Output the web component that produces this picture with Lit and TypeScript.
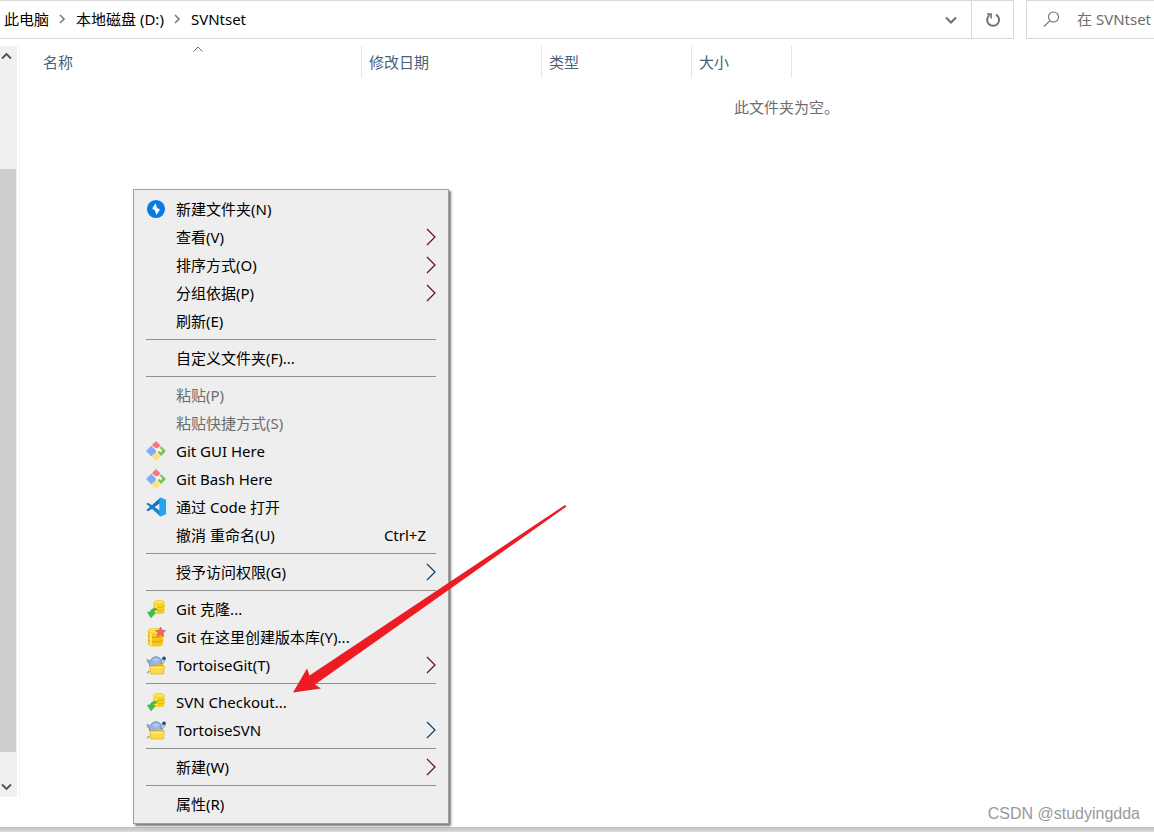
import { LitElement, html, css, svg, nothing } from "lit";
import type { TemplateResult } from "lit";
import { customElement } from "lit/decorators.js";

type Entry =
  | "separator"
  | {
      label: string;
      icon?: TemplateResult;
      submenu?: "red" | "blue";
      shortcut?: string;
      disabled?: boolean;
    };

const boltIcon = svg`
  <circle cx="10" cy="10" r="9.100" fill="#0a7be0"/>
  <path d="M9.600 4.200 6.200 9.400l2.600 1.800 1.600 4.800 3.600-5.400-3-1.600z" fill="#fff"/>`;

const gitIcon = svg`
  <path d="M10 0 20 10 10 20 0 10z" fill="#f6f1ee"/>
  <path d="M10 0l4.600 4.600-2 1.600L10 7.400 5.800 4.200z" fill="#f4787c"/>
  <path d="M5.200 4.800 10 9.400v1.800l-4.600 4.200L0 10z" fill="#7fabf7"/>
  <path d="M15.200 5.200 20 10l-5 5-3.200-3.200 1-2 2.400 1.600 1-2.600-2.600-1.600z" fill="#7cc257"/>
  <path d="M10.400 11.600 14.400 15.600 10 20 5.800 15.800z" fill="#fde173"/>`;

const codeIcon = svg`
  <path d="M14.500.4 2 11.800.3 13l1.700 1.200 3-1.800L14.600 5.800z" fill="#0f74bd"/>
  <path d="M14.500 19.600 2 8.200.3 7 2 5.800l3 1.800 9.600 6.600z" fill="#1583cc"/>
  <path d="M14.500.4 20 2.800v14.400l-5.500 2.400-1.200-1.400V1.800z" fill="#27a2ee"/>`;

const cylinders = svg`
  <path d="M7.600 3.400v9.800c0 2.600 10.900 2.600 10.900 0V3.400z" fill="#fbd021"/>
  <path d="M7.600 6.800c0 2.400 10.900 2.400 10.900 0M7.600 10c0 2.400 10.900 2.400 10.900 0" stroke="#e3a90d" stroke-width=".8" fill="none"/>
  <path d="M10 5.500v9" stroke="#fff07a" stroke-width="1.400"/>
  <ellipse cx="13" cy="3.400" rx="5.400" ry="2" fill="#ffe545" stroke="#efbd16" stroke-width=".6"/>`;

const checkoutIcon = svg`${cylinders}
  <path d="M10.500 9.600C7 9 4.800 10.400 4.200 13L1.400 13.200 5 18.800 9.600 13.800 7.200 13.400c.2-1.600 1.200-2.600 3.300-2.400z" fill="#3cc343" stroke="#1f9a2c" stroke-width=".5"/>`;

const repoIcon = svg`
  <path d="M2 4v13c0 3.400 15 3.400 15 0V4z" fill="#f9c51c"/>
  <path d="M2 8.200c0 3 15 3 15 0M2 12.600c0 3 15 3 15 0" stroke="#dc9a07" fill="none"/>
  <path d="M4.800 6v12" stroke="#ffee75" stroke-width="2"/>
  <ellipse cx="9.500" cy="4" rx="7.500" ry="2.800" fill="#ffe14a" stroke="#efb912" stroke-width=".6"/>
  <path d="m14.600 0 1.500 3.200 3.700.3-2.800 2.500.9 3.600-3.300-1.900-3.300 1.900.9-3.600L9.400 3.500l3.700-.3z" fill="#ef6468" stroke="#cf4e58" stroke-width=".5"/>`;

const tortoiseIcon = svg`
  <path d="M3.600 11C2.800 5 6.600 1.800 10 1.800S16.200 4 16 10z" fill="#94b3ea" stroke="#6583b3" stroke-width=".8"/>
  <path d="M6.500 5.400 10 4l3 1.800M10 4v4" stroke="#c3d5f5" fill="none"/>
  <path d="M.6 4.200l2.800 1.400-2 .6 2.200 2.600M1 18l2.400-2" stroke="#8498a5" stroke-width="1.100" fill="none"/>
  <path d="M14.800 8.500c.6-3.500 1.400-5.300 3-6.300 2.200.6 1.600 4.500-1 6.300z" fill="#b9d6e4" stroke="#5c7b8d" stroke-width=".6"/>
  <circle cx="18" cy="3.200" r="1.800" fill="#1d4d78"/>
  <path d="M4 10.600h5.500l1.500-1.600h6.500v3H4z" fill="#e9b923"/>
  <path d="M4 11.200h14.200L17.400 19H4.400z" fill="#fddc4c" stroke="#dca91b" stroke-width=".7"/>
  <path d="M4.800 12.300h12.600" stroke="#fff2a4"/>`;

const entries: Entry[] = [
  { label: "新建文件夹(N)", icon: boltIcon },
  { label: "查看(V)", submenu: "red" },
  { label: "排序方式(O)", submenu: "red" },
  { label: "分组依据(P)", submenu: "red" },
  { label: "刷新(E)" },
  "separator",
  { label: "自定义文件夹(F)..." },
  "separator",
  { label: "粘贴(P)", disabled: true },
  { label: "粘贴快捷方式(S)", disabled: true },
  { label: "Git GUI Here", icon: gitIcon },
  { label: "Git Bash Here", icon: gitIcon },
  { label: "通过 Code 打开", icon: codeIcon },
  { label: "撤消 重命名(U)", shortcut: "Ctrl+Z" },
  "separator",
  { label: "授予访问权限(G)", submenu: "blue" },
  "separator",
  { label: "Git 克隆...", icon: checkoutIcon },
  { label: "Git 在这里创建版本库(Y)...", icon: repoIcon },
  { label: "TortoiseGit(T)", icon: tortoiseIcon, submenu: "red" },
  "separator",
  { label: "SVN Checkout...", icon: checkoutIcon },
  { label: "TortoiseSVN", icon: tortoiseIcon, submenu: "blue" },
  "separator",
  { label: "新建(W)", submenu: "red" },
  "separator",
  { label: "属性(R)" },
];

@customElement("context-menu")
class ContextMenu extends LitElement {
  static styles = css`
    :host {
      display: block;
      box-sizing: border-box;
      padding: 5px 0;
      background: #eee;
      border: 1px solid #a0a0a0;
      box-shadow: 2px 2px 2px #7c7c7c;
    }
    .item {
      display: grid;
      grid-template-columns: 20px 1fr auto;
      column-gap: 10px;
      align-items: center;
      width: 100%;
      height: 28px;
      padding: 0 12px;
      border: 0;
      background: none;
      color: #000;
      font: inherit;
      line-height: 28px;
      text-align: left;
      white-space: nowrap;
    }
    .item:hover:enabled {
      background: #fff;
    }
    .item:disabled {
      color: #6d6d6d;
    }
    .icon {
      width: 20px;
      height: 20px;
    }
    .shortcut {
      padding-right: 10px;
    }
    .chevron {
      width: 10px;
      height: 18px;
      fill: none;
      stroke-width: 1.2;
    }
    .red {
      stroke: #6b1010;
    }
    .blue {
      stroke: #0c3f66;
    }
    .separator {
      height: 1px;
      margin: 4px 12px;
      border: 0;
      background: #919191;
    }
  `;

  render() {
    return html`<div role="menu">
      ${entries.map((e) =>
        e === "separator"
          ? html`<hr class="separator" />`
          : html`<button class="item" role="menuitem" ?disabled=${e.disabled}>
              <svg class="icon" viewBox="0 0 20 20" aria-hidden="true">${e.icon ?? nothing}</svg>
              <span>${e.label}</span>
              ${e.shortcut ? html`<span class="shortcut">${e.shortcut}</span>` : nothing}
              ${e.submenu
                ? html`<svg class="chevron ${e.submenu}" viewBox="0 0 10 18" aria-hidden="true">
                    <path d="M1 1 9 9 1 17" />
                  </svg>`
                : nothing}
            </button>`
      )}
    </div>`;
  }
}

@customElement("app-root")
class AppRoot extends LitElement {
  static styles = css`
    :host {
      display: flex;
      flex-direction: column;
      position: relative;
      box-sizing: border-box;
      min-height: 100vh;
      overflow: hidden;
      background: #fff;
      color: #000;
      font: 15px/20px "Noto Sans", "Noto Sans CJK SC", sans-serif;
    }
    button {
      margin: 0;
      padding: 0;
      border: 0;
      background: none;
      color: inherit;
      font: inherit;
    }
    svg {
      display: block;
      fill: none;
    }
    .toolbar {
      display: flex;
      gap: 12px;
      height: 39px;
    }
    .address,
    .search {
      display: flex;
      align-items: center;
      box-sizing: border-box;
      border: 1px solid #d9d9d9;
    }
    .address {
      flex: 1;
      border-left: 0;
    }
    .crumbs {
      display: flex;
      flex: 1;
      align-items: center;
      gap: 10px;
      padding: 0 0 2px 4px;
    }
    .history {
      padding: 0 14px;
    }
    .refresh {
      align-self: stretch;
      display: grid;
      place-items: center;
      width: 42px;
      border-left: 1px solid #d9d9d9;
    }
    .search {
      width: 128px;
      border-right: 0;
      padding-left: 16px;
      gap: 16px;
    }
    .search svg {
      flex: none;
    }
    .query {
      flex: 1;
      min-width: 0;
      padding: 0 0 2px 1px;
      border: 0;
      outline: 0;
      background: none;
      font: inherit;
    }
    .query::placeholder {
      color: #6d6d6d;
      opacity: 1;
    }
    .body {
      display: flex;
      flex: 1;
      margin: 7px 0 30px;
    }
    .scrollbar {
      display: flex;
      flex-direction: column;
      width: 17px;
      background: #f0f0f0;
    }
    .scroll-button {
      display: grid;
      place-items: center start;
      height: 20px;
    }
    .before {
      flex: 103;
    }
    .thumb {
      flex: 583;
      margin-right: 1px;
      background: #cdcdcd;
    }
    .after {
      flex: 25;
    }
    .listing {
      flex: 1;
      margin-left: 2px;
      padding-left: 16px;
      border-left: 1px solid #f3f3f3;
    }
    .files {
      width: 100%;
      border-spacing: 0;
      table-layout: fixed;
    }
    .files th {
      box-sizing: border-box;
      height: 32px;
      padding: 0;
      border-right: 1px solid #e5e5e5;
      color: #4c607a;
      font-weight: 400;
      text-align: left;
      vertical-align: top;
    }
    .files .rest {
      border: 0;
    }
    .sort {
      display: grid;
      grid-template-rows: 6px 20px;
      width: 100%;
      padding-left: 7px;
      text-align: left;
    }
    .caret {
      justify-self: center;
      margin-right: 8px;
    }
    .label {
      grid-row: 2;
    }
    .name {
      width: 326px;
    }
    .date {
      width: 180px;
    }
    .type {
      width: 150px;
    }
    .size {
      width: 100px;
    }
    .files .empty {
      padding: 19px 0 0 698px;
      color: #6d6d6d;
      white-space: nowrap;
    }
    .edge {
      height: 5px;
      background: linear-gradient(#bdbdbd, #dcdcdc);
    }
    .menu {
      position: absolute;
      top: 189px;
      left: 133px;
      width: 316px;
    }
    .pointer {
      position: absolute;
      top: 500px;
      left: 290px;
      pointer-events: none;
    }
    .credit {
      position: absolute;
      right: 14px;
      bottom: 8px;
      color: #999;
      font: 16px/20px "Liberation Sans", sans-serif;
    }
  `;

  private crumbArrow() {
    return html`<svg width="7" height="10" stroke="#7a7a7a" stroke-width="1.600" aria-hidden="true">
      <path d="M1 1l4 4-4 4" />
    </svg>`;
  }

  render() {
    return html`
      <header class="toolbar">
        <div class="address">
          <nav class="crumbs" aria-label="地址">
            <button>此电脑</button>
            ${this.crumbArrow()}
            <button>本地磁盘 (D:)</button>
            ${this.crumbArrow()}
            <button>SVNtset</button>
          </nav>
          <button class="history" aria-label="历史记录">
            <svg width="12" height="8" stroke="#6f6f6f" stroke-width="2"><path d="M1 1.500l5 5 5-5" /></svg>
          </button>
          <button class="refresh" aria-label="刷新">
            <svg width="16" height="16" stroke="#707070" stroke-width="2">
              <path d="M11 2.600A6 6 0 1 1 4.600 3" />
              <path d="M2 2h4.200v4.500" stroke-width="1.500" />
            </svg>
          </button>
        </div>
        <div class="search">
          <svg width="17" height="17" stroke="#707070" stroke-width="1.100" aria-hidden="true">
            <circle cx="10.500" cy="6" r="5" />
            <path d="M7 9.600 1 15.500" />
          </svg>
          <input class="query" type="text" aria-label="搜索" placeholder="在 SVNtset" />
        </div>
      </header>
      <main class="body">
        <div class="scrollbar">
          <button class="scroll-button" aria-label="向上滚动">
            <svg width="13" height="8" stroke="#505050" stroke-width="1.800"><path d="M2 6.500 6.500 2 11 6.500" /></svg>
          </button>
          <div class="before"></div>
          <div class="thumb"></div>
          <div class="after"></div>
          <button class="scroll-button" aria-label="向下滚动">
            <svg width="13" height="8" stroke="#505050" stroke-width="1.800"><path d="M2 1.500 6.500 6 11 1.500" /></svg>
          </button>
        </div>
        <div class="listing">
          <table class="files">
            <thead>
              <tr>
                <th class="name">
                  <button class="sort">
                    <svg class="caret" width="10" height="7" stroke="#6d6d6d"><path d="M.5 5.500 5 1l4.500 4.500" /></svg>
                    <span class="label">名称</span>
                  </button>
                </th>
                <th class="date"><button class="sort"><span class="label">修改日期</span></button></th>
                <th class="type"><button class="sort"><span class="label">类型</span></button></th>
                <th class="size"><button class="sort"><span class="label">大小</span></button></th>
                <th class="rest"></th>
              </tr>
            </thead>
            <tbody>
              <tr><td class="empty" colspan="5">此文件夹为空。</td></tr>
            </tbody>
          </table>
        </div>
      </main>
      <div class="edge"></div>
      <context-menu class="menu"></context-menu>
      <svg class="pointer" width="280" height="196" aria-hidden="true">
        <path d="M3 192.500 17 168.500 19.500 175.500 275 5l1.500 1.500L25 184.500 31 188.500z" fill="#ed1c24" />
      </svg>
      <span class="credit">CSDN @studyingdda</span>
    `;
  }
}
